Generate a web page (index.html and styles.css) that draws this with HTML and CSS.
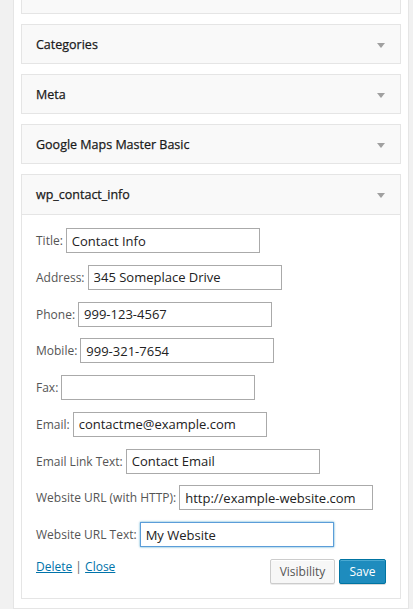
FILE: index.html
```html
<!DOCTYPE html>
<html>
<head>
<meta charset="utf-8">
<link rel="stylesheet" href="styles.css">
</head>
<body>
<div class="sidebar">
  <div class="widget"><div class="widget-top"><span class="title"></span><span class="arrow"></span></div></div>
  <div class="widget"><div class="widget-top"><span class="title">Categories</span><span class="arrow"></span></div></div>
  <div class="widget"><div class="widget-top"><span class="title">Meta</span><span class="arrow"></span></div></div>
  <div class="widget"><div class="widget-top"><span class="title">Google Maps Master Basic</span><span class="arrow"></span></div></div>
  <div class="widget open">
    <div class="widget-top"><span class="title">wp_contact_info</span><span class="arrow"></span></div>
    <div class="widget-inside">
      <div class="row"><label>Title:</label><input type="text" value="Contact Info"></div>
      <div class="row"><label>Address:</label><input type="text" value="345 Someplace Drive"></div>
      <div class="row"><label>Phone:</label><input type="text" value="999-123-4567"></div>
      <div class="row"><label>Mobile:</label><input type="text" value="999-321-7654"></div>
      <div class="row"><label>Fax:</label><input type="text" value=""></div>
      <div class="row"><label>Email:</label><input type="text" value="contactme@example.com"></div>
      <div class="row"><label>Email Link Text:</label><input type="text" value="Contact Email"></div>
      <div class="row"><label>Website URL (with HTTP):</label><input type="text" value="http://example-website.com"></div>
      <div class="row"><label>Website URL Text:</label><input type="text" class="focus" value="My Website"></div>
      <div class="actions">
        <div class="links"><a href="#">Delete</a> <span class="sep">|</span> <a href="#">Close</a></div>
        <div class="buttons"><button class="btn">Visibility</button><button class="btn primary">Save</button></div>
      </div>
    </div>
  </div>
</div>
</body>
</html>
```
FILE: styles.css
```css
html, body {
  margin: 0;
  padding: 0;
  background: #f1f1f1;
  font-family: "Open Sans", "Liberation Sans", sans-serif;
  overflow: hidden;
}
.sidebar {
  box-sizing: border-box;
  width: 396px;
  margin: -41px 0 0 13px;
  padding: 14px 7px 9px;
  background: #fff;
  border: 1px solid #e5e5e5;
}
.widget {
  border: 1px solid #e5e5e5;
  background: #f9f9f9;
  margin-bottom: 10px;
}
.widget:last-child { margin-bottom: 0; }
.widget-top {
  box-sizing: border-box;
  height: 38px;
  display: flex;
  align-items: center;
  justify-content: space-between;
  padding: 0 15px 0 14px;
}
.open .widget-top { height: 39px; }
.title {
  font-size: 12.5px;
  font-weight: 400;
  color: #1a1a1a;
  -webkit-text-stroke: 0.25px #1a1a1a;
}
.arrow {
  width: 0;
  height: 0;
  border-left: 4px solid transparent;
  border-right: 4px solid transparent;
  border-top: 5px solid #a0a0a0;
  margin-top: 2px;
}
.widget-inside {
  background: #fff;
  border-top: 1px solid #e5e5e5;
  padding: 13px 14px 14px;
  display: flex;
  flex-direction: column;
  gap: 11.75px;
}
.row {
  display: flex;
  align-items: center;
  height: 25px;
}
label {
  font-size: 12px;
  color: #555;
  margin-right: 3px;
}
input {
  box-sizing: border-box;
  width: 194px;
  height: 25px;
  border: 1px solid #aaa;
  padding: 0 5px;
  margin: 0;
  font-family: "Open Sans", "Liberation Sans", sans-serif;
  font-size: 13px;
  color: #222;
  background: #fff;
  outline: none;
}
input.focus {
  border-color: #5b9dd9;
  box-shadow: 0 0 2px rgba(30, 140, 190, 0.8);
}
.actions {
  display: flex;
  justify-content: space-between;
  align-items: flex-start;
  margin-top: 0.25px;
}
.links {
  font-size: 12px;
  color: #666;
  line-height: 16px;
}
.links a {
  color: #0073aa;
  text-decoration: underline;
}
.sep { margin: 0; }
.buttons {
  display: flex;
  gap: 4px;
}
.btn {
  box-sizing: border-box;
  height: 25px;
  width: 65px;
  padding: 0;
  font-family: "Open Sans", "Liberation Sans", sans-serif;
  font-size: 12px;
  color: #555;
  background: #f7f7f7;
  border: 1px solid #ccc;
  border-radius: 2px;
  box-shadow: inset 0 1px 0 #fff, 0 1px 0 rgba(0,0,0,.08);
}
.btn.primary {
  width: 47px;
  background: #1e8cbe;
  border-color: #0074a2;
  color: #fff;
  box-shadow: inset 0 1px 0 rgba(120,200,230,.5), 0 1px 0 rgba(0,0,0,.15);
}
```
